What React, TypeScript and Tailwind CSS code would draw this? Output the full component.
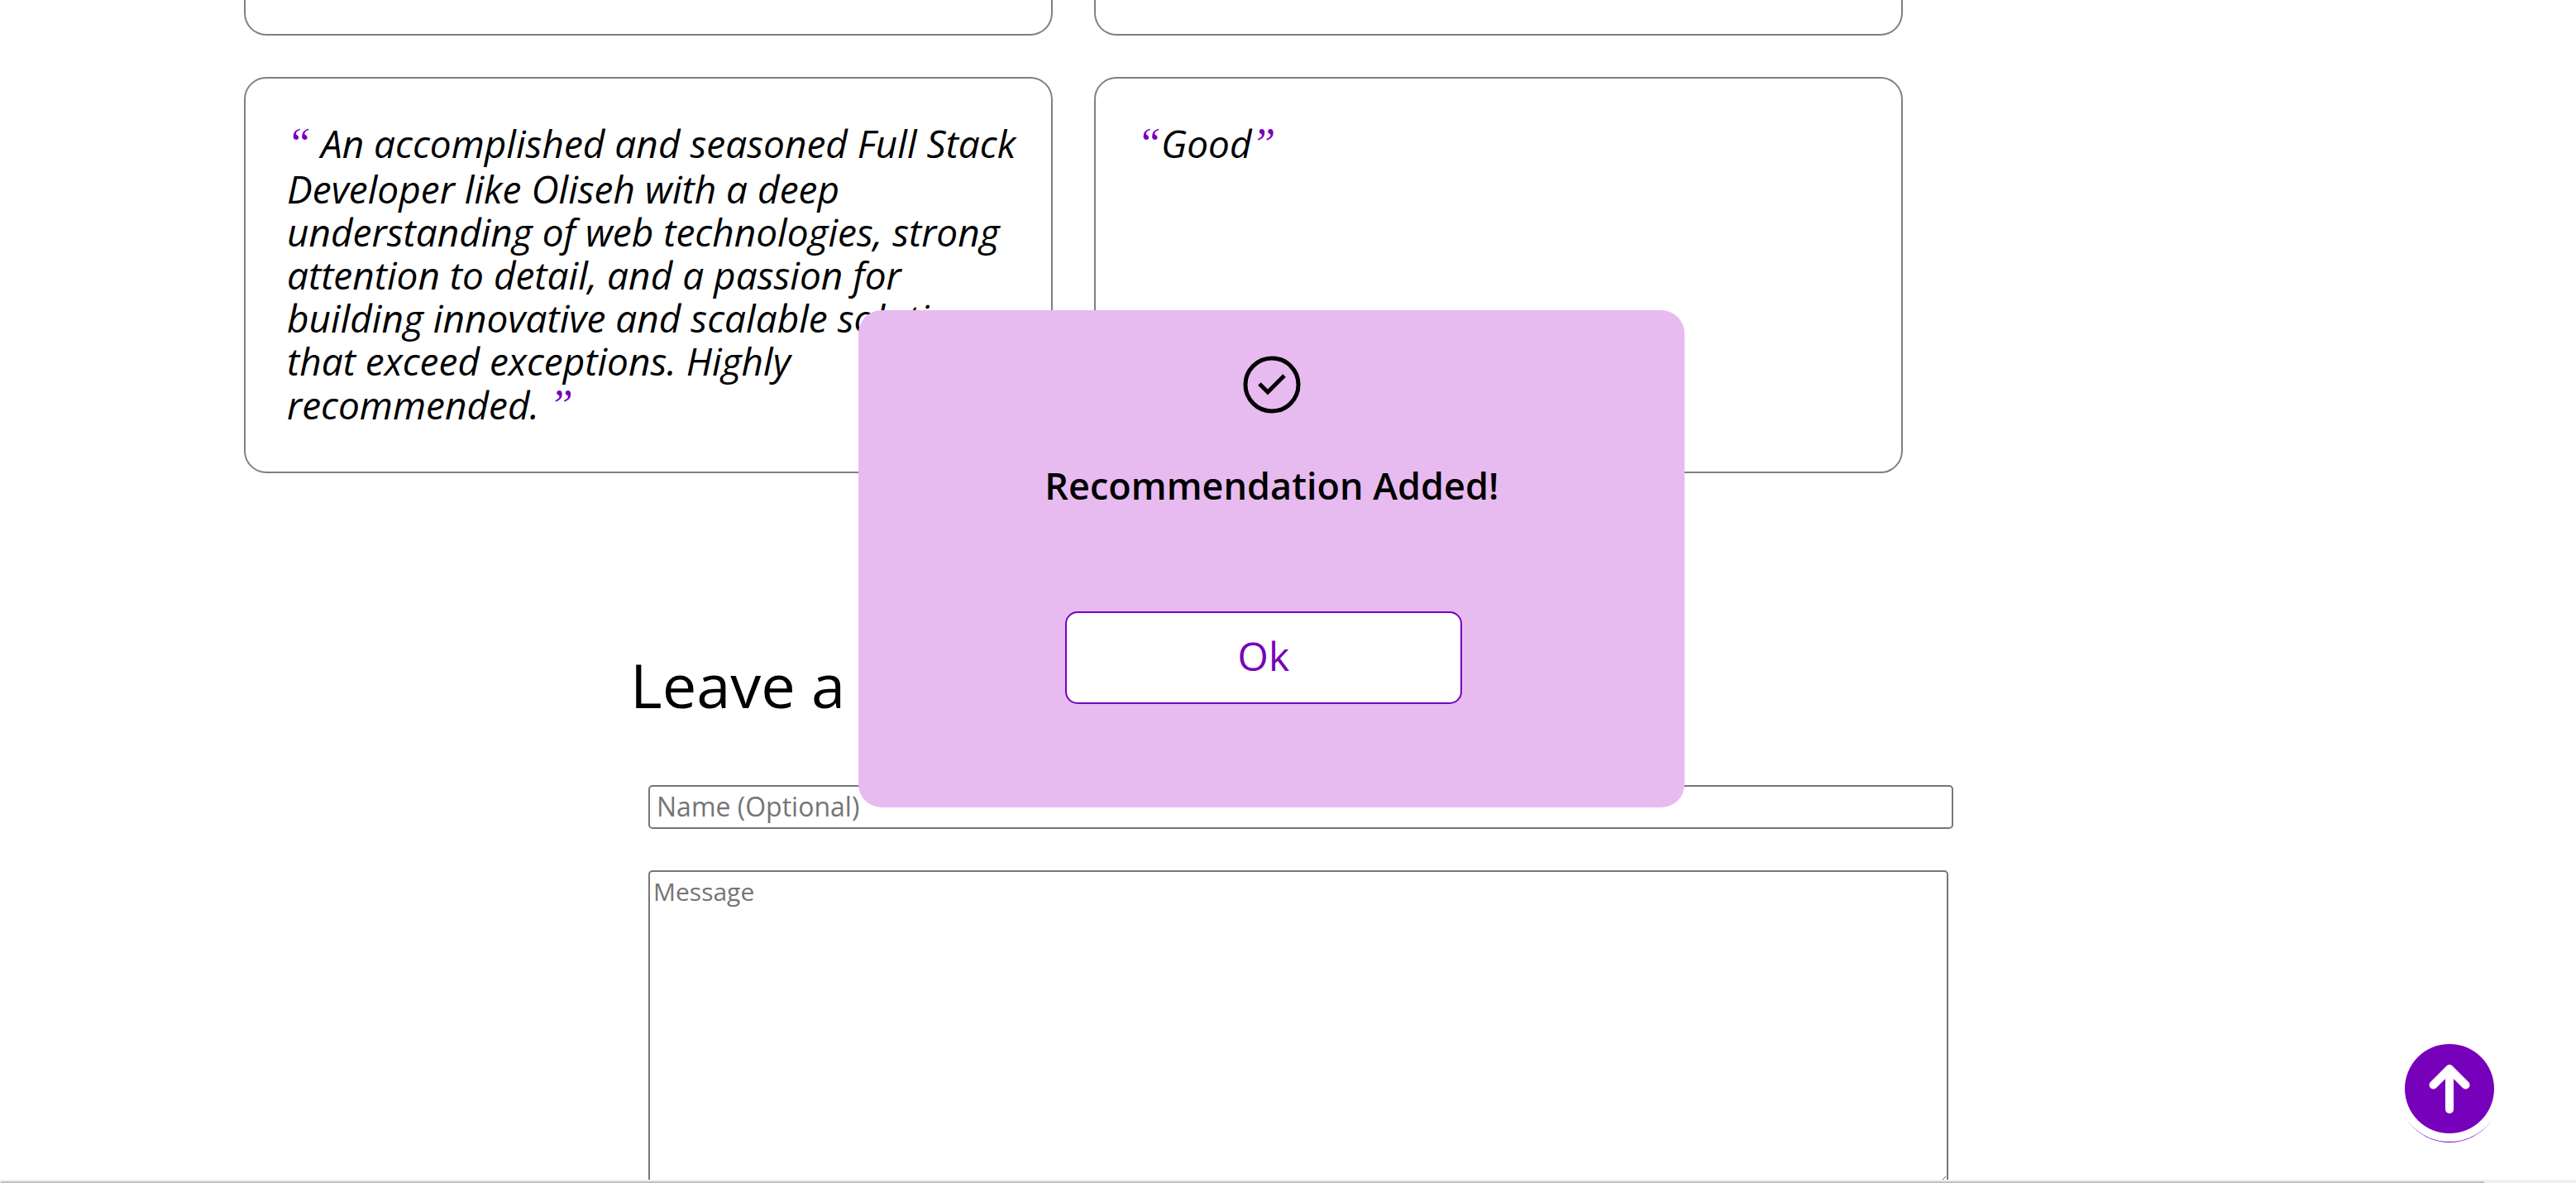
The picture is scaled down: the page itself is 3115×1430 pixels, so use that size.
import type { ReactNode } from "react";

const reviews = [
  {
    text: "An accomplished and seasoned Full Stack Developer like Oliseh with a deep understanding of web technologies, strong attention to detail, and a passion for building innovative and scalable solutions that exceed exceptions. Highly recommended.",
    spaced: true,
  },
  { text: "Good", spaced: false },
];

function Quote({ children }: { children: ReactNode }) {
  return (
    <span className="font-['Liberation_Serif',serif] text-[52px] leading-[56px] text-[#7700bb]">{children}</span>
  );
}

function Recommendations() {
  return (
    <section className="mr-[814px] ml-[295px] grid grid-cols-2 gap-[50px]">
      <div className="h-[43px] rounded-b-[27px] border-2 border-t-0 border-[#808080]" />
      <div className="h-[43px] rounded-b-[27px] border-2 border-t-0 border-[#808080]" />
      {reviews.map((review) => (
        <blockquote
          key={review.text}
          className="rounded-[27px] border-2 border-[#808080] pt-[51px] pr-[38px] pb-[52px] pl-[50px] text-[46px] leading-[52px] italic"
        >
          <Quote>“</Quote>
          {review.spaced && " "}
          {review.text}
          {review.spaced && " "}
          <Quote>”</Quote>
        </blockquote>
      ))}
    </section>
  );
}

function RecommendationForm() {
  return (
    <section className="mt-[208px] mr-[753px] ml-[762px]">
      <h2 className="text-[74px] leading-[96px]">Leave a Recommendation</h2>
      <form className="mt-[73px] ml-[22px] flex flex-col leading-[38px]">
        <input
          type="text"
          aria-label="Name (Optional)"
          placeholder="Name (Optional)"
          className="h-[53px] rounded-[5px] border-2 border-[#767676] bg-white px-2 pb-[2px] text-[32px] placeholder:text-[#757575]"
        />
        <textarea
          aria-label="Message"
          placeholder="Message"
          className="mt-[50px] mr-[6px] h-[380px] rounded-[5px] border-2 border-[#767676] bg-white px-1 py-[5px] text-[30px] placeholder:text-[#757575]"
        />
      </form>
    </section>
  );
}

function SuccessDialog() {
  return (
    <div
      role="dialog"
      aria-labelledby="dialog-title"
      className="fixed top-[375px] left-1/3 h-[601px] w-[999px] rounded-[28px] bg-[#e7bbf0] pt-[55px]"
    >
      <svg viewBox="0 0 70 70" fill="none" stroke="#000" className="mx-auto size-[70px]">
        <circle cx="35" cy="35" r="32" strokeWidth="5" />
        <path d="M20 34l10 10 20-20" strokeWidth="5" />
      </svg>
      <h3 id="dialog-title" className="mt-[57px] text-center text-[45px] leading-[60px] font-semibold">
        Recommendation Added!
      </h3>
      <button
        type="button"
        className="mt-[122px] ml-[25%] h-[112px] w-[48%] rounded-[15px] border-2 border-[#7700bb] bg-white pb-1 text-[48px] text-[#7700bb]"
      >
        Ok
      </button>
    </div>
  );
}

function ScrollTopButton() {
  return (
    <button
      type="button"
      aria-label="Back to top"
      className="fixed right-[89px] bottom-[50px] size-[128px] rounded-full bg-white p-[10px] shadow-[0_3px_0_-2px_#7700bb]"
    >
      <svg
        viewBox="0 0 108 108"
        fill="none"
        stroke="#fff"
        strokeWidth="10"
        strokeLinecap="round"
        strokeLinejoin="round"
        className="size-full"
      >
        <circle cx="54" cy="54" r="54" fill="#7700bb" stroke="none" />
        <path d="M54 79V30M34.500 49.500L54 30l19.500 19.500" />
      </svg>
    </button>
  );
}

export default function App() {
  return (
    <div className="h-screen overflow-hidden bg-white font-['Trebuchet_MS','Open_Sans',sans-serif] text-black">
      <Recommendations />
      <RecommendationForm />
      <SuccessDialog />
      <ScrollTopButton />
      <div className="fixed inset-x-0 bottom-0 h-1 bg-[#f0f0f0] pt-[2px] pr-[111px] pl-px">
        <div className="h-[2px] bg-[#c1c1c1]" />
      </div>
    </div>
  );
}
